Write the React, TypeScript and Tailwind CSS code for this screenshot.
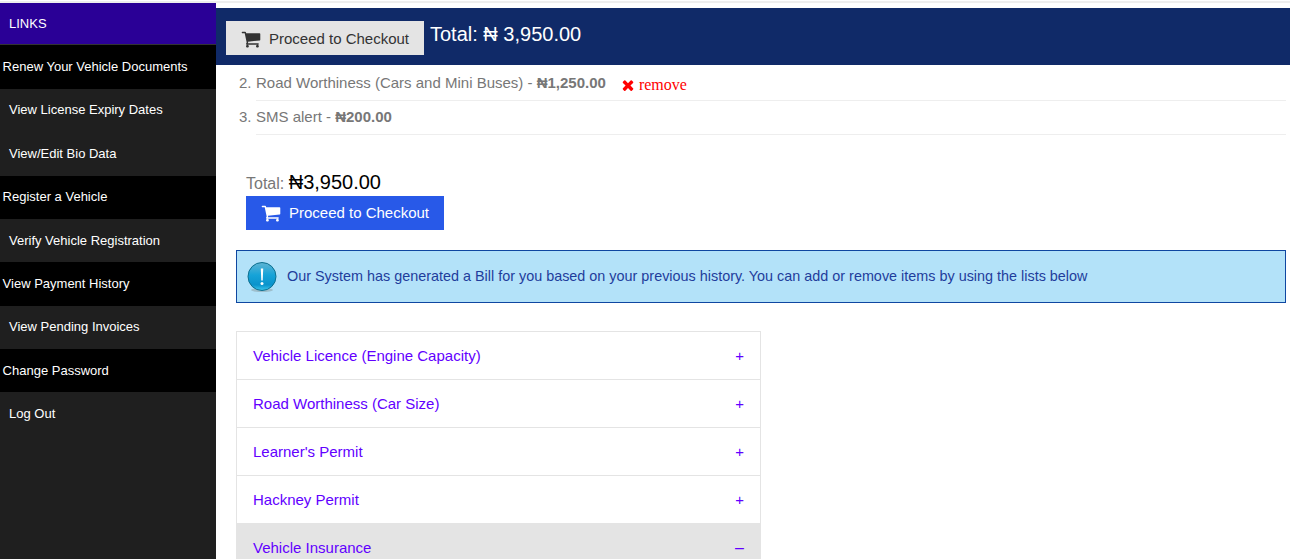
const links = [
  { label: 'Renew Your Vehicle Documents', top: true, h: 'h-[44px]', nudge: '' },
  { label: 'View License Expiry Dates', top: false, h: 'h-[43px]', nudge: 'pb-[1px]' },
  { label: 'View/Edit Bio Data', top: false, h: 'h-[44px]', nudge: '' },
  { label: 'Register a Vehicle', top: true, h: 'h-[43px]', nudge: 'pb-[1px]' },
  { label: 'Verify Vehicle Registration', top: false, h: 'h-[43px]', nudge: '' },
  { label: 'View Payment History', top: true, h: 'h-[44px]', nudge: '' },
  { label: 'View Pending Invoices', top: false, h: 'h-[43px]', nudge: 'pb-[1px]' },
  { label: 'Change Password', top: true, h: 'h-[43px]', nudge: '' },
  { label: 'Log Out', top: false, h: 'h-[43px]', nudge: '' },
];

const accordion = [
  'Vehicle Licence (Engine Capacity)',
  'Road Worthiness (Car Size)',
  "Learner's Permit",
  'Hackney Permit',
];

function CartIcon() {
  return (
    <svg width="20" height="20" viewBox="0 0 1792 1792" fill="currentColor" className="shrink-0">
      <path d="M704 1536q0 52-38 90t-90 38-90-38-38-90 38-90 90-38 90 38 38 90zm896 0q0 52-38 90t-90 38-90-38-38-90 38-90 90-38 90 38 38 90zm128-1088v512q0 24-16.500 42.500t-40.500 21.500l-1044 122q13 60 13 70 0 16-24 64h920q26 0 45 19t19 45-19 45-45 19h-1024q-26 0-45-19t-19-45q0-11 8-31.500t16-36 21.500-40 15.500-29.500l-177-823h-204q-26 0-45-19t-19-45 19-45 45-19h256q16 0 28.500 6.500t19.500 15.500 13 24.500 8 26 5.500 29.500 4.500 26h1201q26 0 45 19t19 45z" />
    </svg>
  );
}

function TimesIcon() {
  return (
    <svg width="16" height="16" viewBox="0 0 1792 1792" fill="currentColor" className="shrink-0">
      <path d="M1490 1322q0 40-28 68l-136 136q-28 28-68 28t-68-28l-294-294-294 294q-28 28-68 28t-68-28l-136-136q-28-28-28-68t28-68l294-294-294-294q-28-28-28-68t28-68l136-136q28-28 68-28t68 28l294 294 294-294q28-28 68-28t68 28l136 136q28 28 28 68t-28 68l-294 294 294 294q28 28 28 68z" />
    </svg>
  );
}

function InfoIcon() {
  return (
    <svg width="30" height="30" viewBox="0 0 30 30" className="shrink-0">
      <defs>
        <linearGradient id="info-bg" x1="0" y1="0" x2="0" y2="1">
          <stop offset="0" stopColor="#5fb4d3" />
          <stop offset="0.45" stopColor="#16a3d8" />
          <stop offset="0.8" stopColor="#0a93cc" />
          <stop offset="1" stopColor="#3cc8ee" />
        </linearGradient>
      </defs>
      <ellipse cx="15" cy="28" rx="11" ry="2" fill="#8fa6ad" opacity="0.6" />
      <circle cx="15" cy="14.500" r="14" fill="url(#info-bg)" stroke="#0d6f8f" strokeWidth="1" />
      <path d="M13.800 6.500h2.400l-.5 12h-1.400z" fill="#fff" />
      <circle cx="15" cy="21.500" r="1.500" fill="#fff" />
    </svg>
  );
}

function Naira() {
  return <span className="font-['Open_Sans',sans-serif] leading-none">₦</span>;
}

export default function App() {
  return (
    <div className="h-[559px] w-[1290px] overflow-hidden bg-white font-['Liberation_Sans',Arial,sans-serif] flex flex-col">
      <div className="h-[3px] shrink-0 border-b-2 border-[#eeeeee]" />
      <div className="flex flex-1 min-h-0">
        <aside className="w-[216px] shrink-0 bg-[#1f1f1f] text-[13px] text-white">
          <div className="h-[42px] bg-[#2a0096] border-b border-[#333333] pl-[9px] flex items-center">LINKS</div>
          {links.map((link) => (
            <div
              key={link.label}
              className={`${link.h} ${link.nudge} flex items-center ${link.top ? 'bg-black pl-[2.6px]' : 'pl-[9px]'}`}
            >
              {link.label}
            </div>
          ))}
        </aside>

        <main className="flex-1 min-w-0">
          <div className="mt-[5px] h-[57px] bg-[#102a68] pl-[10px] flex items-start">
            <button className="mt-[13px] h-[34px] w-[198px] pt-[2px] bg-[#e4e4e4] text-[#333333] text-[15px] flex items-center justify-center gap-[8px]">
              <CartIcon />
              Proceed to Checkout
            </button>
            <span className="ml-[6px] mt-[12px] text-[20px] leading-[28px] text-white">
              Total: <Naira /> 3,950.00
            </span>
          </div>

          <ol className="pl-[40px] pr-[4px] text-[15px] text-[#777777]">
            <li className="relative h-[36px] pt-[1px] border-b border-[#eeeeee] flex items-center">
              <span className="absolute left-[-17px]">2.</span>
              Road Worthiness (Cars and Mini Buses) -&nbsp;<b>₦1,250.00</b>
              <span className="ml-[14px] mt-[3px] flex items-center gap-[3px] font-['Liberation_Serif',serif] text-[16px] text-[#ff0000]">
                <TimesIcon />
                remove
              </span>
            </li>
            <li className="relative h-[34px] border-b border-[#eeeeee] flex items-center">
              <span className="absolute left-[-17px]">3.</span>
              SMS alert -&nbsp;<b>₦200.00</b>
            </li>
          </ol>

          <div className="mt-[35px] pl-[30px]">
            <p className="h-[26px] text-[16px] leading-[24px] text-[#777777]">
              Total: <span className="text-[20px] text-black"><Naira />3,950.00</span>
            </p>
            <button className="h-[34px] w-[198px] bg-[#2859e8] text-white text-[15px] flex items-center justify-center gap-[8px]">
              <CartIcon />
              Proceed to Checkout
            </button>
          </div>

          <div className="mt-[20px] ml-[20px] mr-[4px] h-[53px] border border-[#0f47a1] bg-[#b3e2f9] pl-[10px] flex items-center gap-[10px] text-[14.400px] text-[#1f3d9c]">
            <InfoIcon />
            Our System has generated a Bill for you based on your previous history. You can add or remove items by using the lists below
          </div>

          <div className="mt-[28px] ml-[20px] w-[525px] border border-[#e4e4e4] text-[15px] text-[#6200ff]">
            {accordion.map((title) => (
              <div key={title} className="h-[48px] pt-[1px] border-b border-[#e4e4e4] px-[16px] flex items-center justify-between">
                {title}
                <span className="text-[15px]">+</span>
              </div>
            ))}
            <div className="h-[48px] bg-[#e4e4e4] px-[16px] flex items-center justify-between">
              Vehicle Insurance
              <span className="text-[16px]">–</span>
            </div>
          </div>
        </main>
      </div>
    </div>
  );
}
